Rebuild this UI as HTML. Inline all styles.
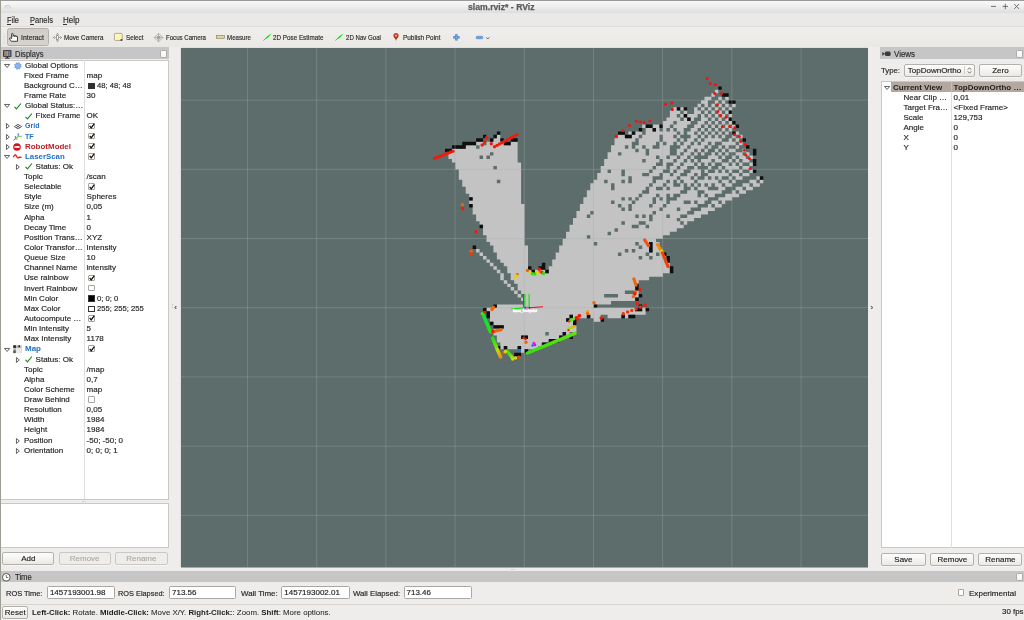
<!DOCTYPE html>
<html><head><meta charset="utf-8"><title>slam.rviz* - RViz</title>
<style>
*{box-sizing:border-box;margin:0;padding:0}
html,body{width:1024px;height:620px;overflow:hidden;background:#efedeb}
body{font-family:"Liberation Sans",sans-serif;font-size:8px;color:#1e1e1e;position:relative;-webkit-text-stroke:0.16px #1e1e1e}
.a{position:absolute}
.t{position:absolute;white-space:nowrap;line-height:10px;height:10px;filter:brightness(1)}
.b,b{font-weight:bold;-webkit-text-stroke:0}
.blue{color:#1f6fc8;font-weight:bold;-webkit-text-stroke:0}
.red{color:#b8232a;font-weight:bold;-webkit-text-stroke:0}
.btn{filter:brightness(1);position:absolute;border:1px solid #b4b0ab;border-radius:2px;background:linear-gradient(#fdfdfd,#ebe9e7);text-align:center;line-height:11px;font-size:8px;box-shadow:0 0.5px 0 #fff}
.btn.dis{color:#a9a7a4;-webkit-text-stroke:0.1px #a9a7a4;border-color:#cbc8c4;background:#efedeb}
.inp{filter:brightness(1);position:absolute;border:1px solid #aaa6a1;border-radius:1.5px;background:#fff;line-height:11px;padding-left:2px;font-size:8px}
.cb{position:absolute;width:6.9px;height:6.6px;border:0.7px solid #aaa49e;background:#fff;border-radius:1px}
.hdr{position:absolute;background:#c6c6c6}
.flt{position:absolute;width:7.2px;height:8.3px;border:0.6px solid #adadad;border-radius:1.8px;background:linear-gradient(#fff,#f4f4f4)}
svg{position:absolute;overflow:visible}
</style></head><body>
<div class="a" style="left:0.00px;top:0.00px;width:1024.00px;height:12.50px;background:linear-gradient(#fafafa,#f0f0f0 45%,#dddddd);"></div>
<div class="a" style="left:0.00px;top:12.50px;width:1024.00px;height:0.70px;background:#f6f6f6;"></div>
<div class="a" style="left:0.00px;top:0.00px;width:1024.00px;height:1.00px;background:#9a9a9a;"></div>
<div class="a" style="left:0.00px;top:0.00px;width:1.00px;height:620.00px;background:#9a9f96;"></div>
<span class="t " style="left:467.80px;top:2.30px;font-size:9px;color:#5a5a5a;font-weight:bold;transform:scaleX(0.9624);transform-origin:0 50%;-webkit-text-stroke:0.25px #5a5a5a;">slam.rviz* - RViz</span>
<svg style="left:988px;top:2px" width="34" height="10" viewBox="0 0 34 10"><g stroke="#686868" stroke-width="0.95" fill="none"><path d="M3 4.4 H8"/><path d="M14.6 4.4 H20 M17.3 1.7 V7.1"/><path d="M26.2 2 L31 6.9 M31 2 L26.2 6.9"/></g></svg>
<svg style="left:4px;top:4px" width="8" height="6" viewBox="0 0 8 6"><path d="M0.5 4.5 L2 1 L3.5 4.5 M3 1.5 h2 M5.5 1.5 v3 M6.5 3 l1 1.5" stroke="#c4c4c4" stroke-width="0.7" fill="none"/></svg>
<div class="a" style="left:1.00px;top:13.20px;width:1023.00px;height:13.80px;background:#ebe9e7;"></div>
<span class="t " style="left:7.00px;top:15.00px;font-size:8.6px;color:#333;transform:scaleX(0.8660);transform-origin:0 50%;">File</span>
<div class="a" style="left:7.00px;top:24.20px;width:4.20px;height:0.60px;background:#333;"></div>
<span class="t " style="left:29.50px;top:15.00px;font-size:8.6px;color:#333;transform:scaleX(0.8747);transform-origin:0 50%;">Panels</span>
<div class="a" style="left:29.50px;top:24.20px;width:4.20px;height:0.60px;background:#333;"></div>
<span class="t " style="left:62.50px;top:15.00px;font-size:8.6px;color:#333;transform:scaleX(0.9329);transform-origin:0 50%;">Help</span>
<div class="a" style="left:62.50px;top:24.20px;width:4.20px;height:0.60px;background:#333;"></div>
<div class="a" style="left:1.00px;top:26.20px;width:1023.00px;height:0.60px;background:#dedbd8;"></div>
<div class="a" style="left:1.00px;top:26.80px;width:1023.00px;height:0.70px;background:#f3f2f0;"></div>
<div class="a" style="left:1.00px;top:27.20px;width:1023.00px;height:20.30px;background:linear-gradient(#f1efed,#eae8e5);"></div>
<div class="a" style="left:2.50px;top:33.40px;width:0.80px;height:0.80px;background:#d9d6d2;"></div>
<div class="a" style="left:4.20px;top:34.70px;width:0.80px;height:0.80px;background:#d9d6d2;"></div>
<div class="a" style="left:2.50px;top:36.10px;width:0.80px;height:0.80px;background:#d9d6d2;"></div>
<div class="a" style="left:4.20px;top:37.40px;width:0.80px;height:0.80px;background:#d9d6d2;"></div>
<div class="a" style="left:2.50px;top:38.80px;width:0.80px;height:0.80px;background:#d9d6d2;"></div>
<div class="a" style="left:4.20px;top:40.10px;width:0.80px;height:0.80px;background:#d9d6d2;"></div>
<div class="a" style="left:2.50px;top:41.50px;width:0.80px;height:0.80px;background:#d9d6d2;"></div>
<div class="a" style="left:4.20px;top:42.80px;width:0.80px;height:0.80px;background:#d9d6d2;"></div>
<div class="a" style="left:7.1px;top:28.2px;width:42.4px;height:17.5px;border:0.7px solid #b3afaa;border-radius:2.5px;background:linear-gradient(#d1cdc9,#d6d3cf);"></div>
<span class="t " style="left:20.50px;top:33.00px;font-size:7.2px;color:#2e2e2e;transform:scaleX(0.9579);transform-origin:0 50%;">Interact</span>
<span class="t " style="left:64.00px;top:33.00px;font-size:7.2px;color:#2e2e2e;transform:scaleX(0.8737);transform-origin:0 50%;">Move Camera</span>
<span class="t " style="left:125.50px;top:33.00px;font-size:7.2px;color:#2e2e2e;transform:scaleX(0.8745);transform-origin:0 50%;">Select</span>
<span class="t " style="left:165.50px;top:33.00px;font-size:7.2px;color:#2e2e2e;transform:scaleX(0.8472);transform-origin:0 50%;">Focus Camera</span>
<span class="t " style="left:227.00px;top:33.00px;font-size:7.2px;color:#2e2e2e;transform:scaleX(0.8568);transform-origin:0 50%;">Measure</span>
<span class="t " style="left:273.00px;top:33.00px;font-size:7.2px;color:#2e2e2e;transform:scaleX(0.8764);transform-origin:0 50%;">2D Pose Estimate</span>
<span class="t " style="left:346.00px;top:33.00px;font-size:7.2px;color:#2e2e2e;transform:scaleX(0.8492);transform-origin:0 50%;">2D Nav Goal</span>
<span class="t " style="left:403.00px;top:33.00px;font-size:7.2px;color:#2e2e2e;transform:scaleX(0.8923);transform-origin:0 50%;">Publish Point</span>
<svg style="left:9.1px;top:33px" width="9.2" height="8.8" viewBox="0 0 9.2 8.8"><path d="M2.6 5.6 V1.1 a0.75 0.75 0 0 1 1.5 0 V3.4 V3.1 a0.75 0.7 0 0 1 1.5 0 V3.7 V3.4 a0.75 0.7 0 0 1 1.5 0 V4 V3.8 a0.7 0.7 0 0 1 1.4 0 V8.3 H2.4 L0.5 6 a0.7 0.7 0 0 1 1 -0.9 z" fill="#fff" stroke="#222" stroke-width="0.85" stroke-linejoin="round"/></svg>
<svg style="left:53px;top:33px" width="9" height="9" viewBox="0 0 9 9"><g stroke="#6a6a6a" stroke-width="0.6" fill="none"><path d="M4.5 0.4 V8.6 M0.4 4.5 H8.6" stroke-dasharray="0.9 0.5"/><path d="M3.3 1.7 L4.5 0.4 L5.7 1.7 M3.3 7.3 L4.5 8.6 L5.7 7.3 M1.7 3.3 L0.4 4.5 L1.7 5.7 M7.3 3.3 L8.6 4.5 L7.3 5.7"/><rect x="3.5" y="2.7" width="2" height="3.6" fill="#fff"/></g></svg>
<svg style="left:114.2px;top:33.2px" width="9" height="8.4" viewBox="0 0 9 9" preserveAspectRatio="none"><rect x="0.4" y="0.4" width="7.8" height="7.6" rx="1" fill="#fdf6b4" stroke="#8a8a7a" stroke-width="0.7"/><rect x="6.6" y="6.6" width="1.8" height="1.8" fill="#333"/></svg>
<svg style="left:154px;top:32.8px" width="9.2" height="9.2" viewBox="0 0 9.2 9.2"><g stroke="#8a8a8a" stroke-width="0.55" fill="none"><path d="M4.6 0.3 L8.9 4.6 L4.6 8.9 L0.3 4.6 z"/><path d="M4.6 0.3 V8.9 M0.3 4.6 H8.9"/><rect x="3.3" y="3.3" width="2.6" height="2.6"/></g></svg>
<svg style="left:216px;top:35.4px" width="9" height="3.6" viewBox="0 0 9 3.6"><rect x="0.3" y="0.3" width="8.3" height="3" fill="#dcd49c" stroke="#857c5c" stroke-width="0.6"/></svg>
<svg style="left:262.6px;top:33.6px" width="8.2" height="7" viewBox="0 0 8.2 7"><path d="M0 6.8 L4.4 2 L8 0 L5.6 3.2 z" fill="#1fe334"/><path d="M0.2 6.6 L7.8 0.2" stroke="#1fe334" stroke-width="0.7"/></svg>
<svg style="left:335.1px;top:33.6px" width="8.2" height="7" viewBox="0 0 8.2 7"><path d="M0 6.8 L4.4 2 L8 0 L5.6 3.2 z" fill="#1fe334"/><path d="M0.2 6.6 L7.8 0.2" stroke="#1fe334" stroke-width="0.7"/></svg>
<svg style="left:393.4px;top:33.2px" width="6" height="8" viewBox="0 0 6 8"><defs><linearGradient id="pp" x1="0" y1="0" x2="0" y2="1"><stop offset="0" stop-color="#e0452a"/><stop offset="1" stop-color="#7a3a1c"/></linearGradient></defs><path d="M3 7.9 C3 5.8 0.3 4.6 0.3 2.8 a2.7 2.7 0 0 1 5.4 0 C5.7 4.6 3 5.8 3 7.9 z" fill="url(#pp)"/><circle cx="3" cy="2.7" r="0.9" fill="#f0b8a4"/></svg>
<svg style="left:452.6px;top:33.9px" width="6.8" height="6.8" viewBox="0 0 6.8 6.8"><path d="M3.4 0.2 V6.6 M0.2 3.4 H6.6" stroke="#4379c6" stroke-width="2.3"/><path d="M3.4 0.9 V5.9 M0.9 3.4 H5.9" stroke="#7fa9e2" stroke-width="0.9"/></svg>
<svg style="left:476px;top:36px" width="7" height="3" viewBox="0 0 7 3"><rect x="0.2" y="0.2" width="6.6" height="2.6" rx="0.9" fill="#6c9cdc" stroke="#4a80cc" stroke-width="0.5"/></svg>
<svg style="left:486.3px;top:37.4px" width="3.6" height="2.6" viewBox="0 0 3.6 2.6"><path d="M0.3 0.4 L1.8 2 L3.3 0.4" stroke="#333" stroke-width="0.75" fill="none"/></svg>
<div class="hdr" style="left:1px;top:47.4px;width:167.7px;height:12.1px"></div>
<svg style="left:2.7px;top:49.8px" width="8.6" height="8.8" viewBox="0 0 8.6 8.8"><rect x="0.2" y="0.2" width="8.2" height="6.6" rx="0.4" fill="#1c1c1c"/><rect x="1" y="1" width="2.2" height="5" fill="#c66a6a"/><rect x="3.2" y="1" width="2.2" height="5" fill="#7ab87a"/><rect x="5.4" y="1" width="2.2" height="5" fill="#7a7ac8"/><rect x="3.5" y="6.8" width="1.6" height="1.1" fill="#1c1c1c"/><rect x="2" y="7.8" width="4.6" height="0.8" fill="#1c1c1c"/></svg>
<span class="t " style="left:14.50px;top:50.20px;font-size:8.2px;color:#333;transform:scaleX(0.9198);transform-origin:0 50%;">Displays</span>
<div class="flt" style="left:160px;top:49.5px"></div>
<div class="a" style="left:1.00px;top:59.60px;width:167.60px;height:440.00px;background:#fff;border:0.6px solid #cbc8c4;border-left:none"></div>
<div class="a" style="left:84.30px;top:60.00px;width:0.60px;height:439.00px;background:#dedede;"></div>
<svg style="left:3.90px;top:63.80px" width="6.2" height="4" viewBox="0 0 6.2 4"><path d="M0.5 0.45 H5.7 L3.1 3.5 z" fill="none" stroke="#3c3c3c" stroke-width="0.8"/></svg>
<svg style="left:13.8px;top:61.70px" width="7.8" height="7.8" viewBox="0 0 7.8 7.8"><circle cx="3.9" cy="3.9" r="2.9" fill="none" stroke="#6f9fe0" stroke-width="1.7" stroke-dasharray="1.35 0.93"/><circle cx="3.9" cy="3.9" r="2.95" fill="#77a5e4"/><circle cx="3.9" cy="3.9" r="1.7" fill="none" stroke="#a4c3ee" stroke-width="0.6"/><circle cx="3.9" cy="3.9" r="0.7" fill="#b8d0f2"/></svg>
<span class="t " style="left:25.00px;top:60.60px;">Global Options</span>
<span class="t " style="left:24.00px;top:70.73px;">Fixed Frame</span>
<span class="t " style="left:86.60px;top:70.73px;">map</span>
<span class="t " style="left:24.00px;top:80.87px;">Background C…</span>
<div class="a" style="left:88.20px;top:82.57px;width:6.6px;height:6.6px;background:#303030;border:0.6px solid #333"></div>
<span class="t " style="left:97.20px;top:80.87px;transform:scaleX(0.9550);transform-origin:0 50%;">48; 48; 48</span>
<span class="t " style="left:24.00px;top:91.00px;">Frame Rate</span>
<span class="t " style="left:86.60px;top:91.00px;">30</span>
<svg style="left:3.90px;top:104.34px" width="6.2" height="4" viewBox="0 0 6.2 4"><path d="M0.5 0.45 H5.7 L3.1 3.5 z" fill="none" stroke="#3c3c3c" stroke-width="0.8"/></svg>
<svg style="left:13.50px;top:102.54px" width="7.4" height="6.6" viewBox="0 0 7.4 6.6"><path d="M0.5 3.8 L2.5 5.9 L6.9 0.5" fill="none" stroke="#1f8a1f" stroke-width="1.15"/></svg>
<span class="t " style="left:25.00px;top:101.14px;">Global Status:…</span>
<svg style="left:24.50px;top:112.67px" width="7.4" height="6.6" viewBox="0 0 7.4 6.6"><path d="M0.5 3.8 L2.5 5.9 L6.9 0.5" fill="none" stroke="#1f8a1f" stroke-width="1.15"/></svg>
<span class="t " style="left:35.60px;top:111.27px;">Fixed Frame</span>
<span class="t " style="left:86.60px;top:111.27px;">OK</span>
<svg style="left:5.60px;top:123.41px" width="3.8" height="6" viewBox="0 0 3.8 6"><path d="M0.45 0.5 V5.5 L3.3 3 z" fill="none" stroke="#3c3c3c" stroke-width="0.8"/></svg>
<svg style="left:13.5px;top:123.81px" width="8" height="5.2" viewBox="0 0 8 5.2"><g stroke="#333" stroke-width="0.7" fill="none"><path d="M4 0.3 L7.7 2.6 L4 4.9 L0.3 2.6 z M2.1 1.4 L5.9 3.8 M5.9 1.4 L2.1 3.8"/></g></svg>
<span class="t blue" style="left:25.00px;top:121.41px;transform:scaleX(0.8817);transform-origin:0 50%;">Grid</span>
<div class="cb" style="left:87.90px;top:122.51px"></div>
<svg style="left:88.50px;top:122.71px" width="6" height="5.8" viewBox="0 0 6 5.8"><path d="M0.7 2.9 L2.2 4.9 L5.3 0.6" fill="none" stroke="#141414" stroke-width="1.25"/></svg>
<svg style="left:5.60px;top:133.54px" width="3.8" height="6" viewBox="0 0 3.8 6"><path d="M0.45 0.5 V5.5 L3.3 3 z" fill="none" stroke="#3c3c3c" stroke-width="0.8"/></svg>
<svg style="left:13px;top:132.54px" width="9" height="8" viewBox="0 0 9 8"><path d="M5.2 3.4 V0.2" stroke="#3a4fe0" stroke-width="0.9"/><path d="M2.4 5.6 V3" stroke="#3a4fe0" stroke-width="0.8"/><path d="M5 3.6 L0.4 7.4" stroke="#e03a3a" stroke-width="0.9"/><path d="M5.2 3.3 H8.8 M2.6 6 H4.8" stroke="#2fd02f" stroke-width="0.9"/></svg>
<span class="t blue" style="left:25.00px;top:131.54px;transform:scaleX(0.8903);transform-origin:0 50%;">TF</span>
<div class="cb" style="left:87.90px;top:132.64px"></div>
<svg style="left:88.50px;top:132.84px" width="6" height="5.8" viewBox="0 0 6 5.8"><path d="M0.7 2.9 L2.2 4.9 L5.3 0.6" fill="none" stroke="#141414" stroke-width="1.25"/></svg>
<svg style="left:5.60px;top:143.68px" width="3.8" height="6" viewBox="0 0 3.8 6"><path d="M0.45 0.5 V5.5 L3.3 3 z" fill="none" stroke="#3c3c3c" stroke-width="0.8"/></svg>
<svg style="left:13.2px;top:142.68px" width="8" height="8" viewBox="0 0 8 8"><circle cx="4" cy="4" r="3.8" fill="#d4141c"/><rect x="1.5" y="3.1" width="5" height="1.8" fill="#fff"/></svg>
<span class="t red" style="left:25.00px;top:141.68px;transform:scaleX(0.9955);transform-origin:0 50%;">RobotModel</span>
<div class="cb" style="left:87.90px;top:142.78px"></div>
<svg style="left:88.50px;top:142.98px" width="6" height="5.8" viewBox="0 0 6 5.8"><path d="M0.7 2.9 L2.2 4.9 L5.3 0.6" fill="none" stroke="#141414" stroke-width="1.25"/></svg>
<svg style="left:3.90px;top:155.01px" width="6.2" height="4" viewBox="0 0 6.2 4"><path d="M0.5 0.45 H5.7 L3.1 3.5 z" fill="none" stroke="#3c3c3c" stroke-width="0.8"/></svg>
<svg style="left:13px;top:154.31px" width="9" height="5" viewBox="0 0 9 5"><path d="M0.4 3.2 C1.4 0.2 2.6 0.2 3.4 2 S5.2 4.6 6.2 3.2 L8.6 3.4" stroke="#e01c14" stroke-width="1.35" fill="none"/></svg>
<span class="t blue" style="left:25.00px;top:151.81px;transform:scaleX(0.9835);transform-origin:0 50%;">LaserScan</span>
<div class="cb" style="left:87.90px;top:152.91px"></div>
<svg style="left:88.50px;top:153.12px" width="6" height="5.8" viewBox="0 0 6 5.8"><path d="M0.7 2.9 L2.2 4.9 L5.3 0.6" fill="none" stroke="#141414" stroke-width="1.25"/></svg>
<svg style="left:16.20px;top:163.95px" width="3.8" height="6" viewBox="0 0 3.8 6"><path d="M0.45 0.5 V5.5 L3.3 3 z" fill="none" stroke="#3c3c3c" stroke-width="0.8"/></svg>
<svg style="left:24.50px;top:163.35px" width="7.4" height="6.6" viewBox="0 0 7.4 6.6"><path d="M0.5 3.8 L2.5 5.9 L6.9 0.5" fill="none" stroke="#1f8a1f" stroke-width="1.15"/></svg>
<span class="t " style="left:35.60px;top:161.95px;">Status: Ok</span>
<span class="t " style="left:24.00px;top:172.08px;">Topic</span>
<span class="t " style="left:86.60px;top:172.08px;">/scan</span>
<span class="t " style="left:24.00px;top:182.22px;">Selectable</span>
<div class="cb" style="left:87.90px;top:183.32px"></div>
<svg style="left:88.50px;top:183.52px" width="6" height="5.8" viewBox="0 0 6 5.8"><path d="M0.7 2.9 L2.2 4.9 L5.3 0.6" fill="none" stroke="#141414" stroke-width="1.25"/></svg>
<span class="t " style="left:24.00px;top:192.35px;">Style</span>
<span class="t " style="left:86.60px;top:192.35px;">Spheres</span>
<span class="t " style="left:24.00px;top:202.49px;">Size (m)</span>
<span class="t " style="left:86.60px;top:202.49px;">0,05</span>
<span class="t " style="left:24.00px;top:212.62px;">Alpha</span>
<span class="t " style="left:86.60px;top:212.62px;">1</span>
<span class="t " style="left:24.00px;top:222.76px;">Decay Time</span>
<span class="t " style="left:86.60px;top:222.76px;">0</span>
<span class="t " style="left:24.00px;top:232.89px;">Position Trans…</span>
<span class="t " style="left:86.60px;top:232.89px;">XYZ</span>
<span class="t " style="left:24.00px;top:243.03px;">Color Transfor…</span>
<span class="t " style="left:86.60px;top:243.03px;">Intensity</span>
<span class="t " style="left:24.00px;top:253.16px;">Queue Size</span>
<span class="t " style="left:86.60px;top:253.16px;">10</span>
<span class="t " style="left:24.00px;top:263.30px;">Channel Name</span>
<span class="t " style="left:86.60px;top:263.30px;">intensity</span>
<span class="t " style="left:24.00px;top:273.44px;">Use rainbow</span>
<div class="cb" style="left:87.90px;top:274.54px"></div>
<svg style="left:88.50px;top:274.74px" width="6" height="5.8" viewBox="0 0 6 5.8"><path d="M0.7 2.9 L2.2 4.9 L5.3 0.6" fill="none" stroke="#141414" stroke-width="1.25"/></svg>
<span class="t " style="left:24.00px;top:283.57px;">Invert Rainbow</span>
<div class="cb" style="left:87.90px;top:284.67px"></div>
<span class="t " style="left:24.00px;top:293.70px;">Min Color</span>
<div class="a" style="left:88.20px;top:295.40px;width:6.6px;height:6.6px;background:#000;border:0.6px solid #333"></div>
<span class="t " style="left:97.20px;top:293.70px;transform:scaleX(0.9550);transform-origin:0 50%;">0; 0; 0</span>
<span class="t " style="left:24.00px;top:303.84px;">Max Color</span>
<div class="a" style="left:88.20px;top:305.54px;width:6.6px;height:6.6px;background:#fff;border:0.6px solid #333"></div>
<span class="t " style="left:97.20px;top:303.84px;transform:scaleX(0.9550);transform-origin:0 50%;">255; 255; 255</span>
<span class="t " style="left:24.00px;top:313.98px;">Autocompute …</span>
<div class="cb" style="left:87.90px;top:315.08px"></div>
<svg style="left:88.50px;top:315.28px" width="6" height="5.8" viewBox="0 0 6 5.8"><path d="M0.7 2.9 L2.2 4.9 L5.3 0.6" fill="none" stroke="#141414" stroke-width="1.25"/></svg>
<span class="t " style="left:24.00px;top:324.11px;">Min Intensity</span>
<span class="t " style="left:86.60px;top:324.11px;">5</span>
<span class="t " style="left:24.00px;top:334.25px;">Max Intensity</span>
<span class="t " style="left:86.60px;top:334.25px;">1178</span>
<svg style="left:3.90px;top:347.58px" width="6.2" height="4" viewBox="0 0 6.2 4"><path d="M0.5 0.45 H5.7 L3.1 3.5 z" fill="none" stroke="#3c3c3c" stroke-width="0.8"/></svg>
<svg style="left:13px;top:345.18px" width="9" height="8.4" viewBox="0 0 9 8.4"><rect x="0.3" y="0.3" width="8.4" height="7.8" fill="#b9b9b9"/><rect x="0.3" y="0.3" width="2.6" height="2.6" fill="#222"/><rect x="5.4" y="0.3" width="1.6" height="2" fill="#222"/><rect x="3" y="3" width="5.7" height="5.1" fill="#e8e8e8"/><rect x="0.3" y="5.4" width="2.4" height="2.7" fill="#555"/></svg>
<span class="t blue" style="left:25.00px;top:344.38px;transform:scaleX(1.0001);transform-origin:0 50%;">Map</span>
<div class="cb" style="left:87.90px;top:345.48px"></div>
<svg style="left:88.50px;top:345.68px" width="6" height="5.8" viewBox="0 0 6 5.8"><path d="M0.7 2.9 L2.2 4.9 L5.3 0.6" fill="none" stroke="#141414" stroke-width="1.25"/></svg>
<svg style="left:16.20px;top:356.51px" width="3.8" height="6" viewBox="0 0 3.8 6"><path d="M0.45 0.5 V5.5 L3.3 3 z" fill="none" stroke="#3c3c3c" stroke-width="0.8"/></svg>
<svg style="left:24.50px;top:355.91px" width="7.4" height="6.6" viewBox="0 0 7.4 6.6"><path d="M0.5 3.8 L2.5 5.9 L6.9 0.5" fill="none" stroke="#1f8a1f" stroke-width="1.15"/></svg>
<span class="t " style="left:35.60px;top:354.51px;">Status: Ok</span>
<span class="t " style="left:24.00px;top:364.65px;">Topic</span>
<span class="t " style="left:86.60px;top:364.65px;">/map</span>
<span class="t " style="left:24.00px;top:374.78px;">Alpha</span>
<span class="t " style="left:86.60px;top:374.78px;">0,7</span>
<span class="t " style="left:24.00px;top:384.92px;">Color Scheme</span>
<span class="t " style="left:86.60px;top:384.92px;">map</span>
<span class="t " style="left:24.00px;top:395.05px;">Draw Behind</span>
<div class="cb" style="left:87.90px;top:396.15px"></div>
<span class="t " style="left:24.00px;top:405.19px;">Resolution</span>
<span class="t " style="left:86.60px;top:405.19px;">0,05</span>
<span class="t " style="left:24.00px;top:415.32px;">Width</span>
<span class="t " style="left:86.60px;top:415.32px;">1984</span>
<span class="t " style="left:24.00px;top:425.46px;">Height</span>
<span class="t " style="left:86.60px;top:425.46px;">1984</span>
<svg style="left:16.20px;top:437.60px" width="3.8" height="6" viewBox="0 0 3.8 6"><path d="M0.45 0.5 V5.5 L3.3 3 z" fill="none" stroke="#3c3c3c" stroke-width="0.8"/></svg>
<span class="t " style="left:24.00px;top:435.60px;">Position</span>
<span class="t " style="left:86.60px;top:435.60px;">-50; -50; 0</span>
<svg style="left:16.20px;top:447.73px" width="3.8" height="6" viewBox="0 0 3.8 6"><path d="M0.45 0.5 V5.5 L3.3 3 z" fill="none" stroke="#3c3c3c" stroke-width="0.8"/></svg>
<span class="t " style="left:24.00px;top:445.73px;">Orientation</span>
<span class="t " style="left:86.60px;top:445.73px;">0; 0; 0; 1</span>
<div class="a" style="left:81.50px;top:500.80px;width:0.70px;height:0.70px;background:#cfccc8;"></div>
<div class="a" style="left:83.20px;top:500.80px;width:0.70px;height:0.70px;background:#cfccc8;"></div>
<div class="a" style="left:84.90px;top:500.80px;width:0.70px;height:0.70px;background:#cfccc8;"></div>
<div class="a" style="left:1.00px;top:503.40px;width:167.60px;height:44.60px;background:#fff;border:0.6px solid #cbc8c4;border-left:none"></div>
<div class="btn" style="left:2.3px;top:551.7px;width:52.2px;height:13.2px">Add</div>
<div class="btn dis" style="left:58.6px;top:551.7px;width:52.2px;height:13.2px">Remove</div>
<div class="btn dis" style="left:115.1px;top:551.7px;width:52.5px;height:13.2px">Rename</div>
<span class="t " style="left:174.30px;top:302.60px;color:#555;">‹</span>
<div class="a" style="left:172.00px;top:303.50px;width:0.70px;height:0.70px;background:#cfccc8;"></div>
<div class="a" style="left:172.00px;top:305.30px;width:0.70px;height:0.70px;background:#cfccc8;"></div>
<div class="a" style="left:172.00px;top:307.10px;width:0.70px;height:0.70px;background:#cfccc8;"></div>
<span class="t " style="left:870.50px;top:302.60px;color:#555;">›</span>
<div class="hdr" style="left:880.4px;top:47.4px;width:143.6px;height:12.1px"></div>
<svg style="left:882.3px;top:51px" width="9" height="6" viewBox="0 0 9 6"><rect x="3" y="0.6" width="5.6" height="4.4" rx="1.3" fill="#3a3a3a"/><path d="M0.3 0.9 L3.2 2.8 L0.3 4.7 z" fill="#3a3a3a"/></svg>
<span class="t " style="left:893.60px;top:50.20px;font-size:8.2px;color:#333;transform:scaleX(0.9666);transform-origin:0 50%;">Views</span>
<div class="flt" style="left:1015.5px;top:49.5px"></div>
<span class="t " style="left:881.30px;top:66.00px;transform:scaleX(0.9711);transform-origin:0 50%;">Type:</span>
<div class="btn" style="left:904.2px;top:63.6px;width:70.4px;height:13.1px;text-align:left;padding-left:2.6px;line-height:12px">TopDownOrtho</div>
<div class="a" style="left:963.60px;top:65.80px;width:0.60px;height:8.60px;background:#d5d2ce;"></div>
<svg style="left:966.6px;top:66.8px" width="5" height="7" viewBox="0 0 5 7"><path d="M0.8 2.6 L2.5 0.8 L4.2 2.6 M0.8 4.4 L2.5 6.2 L4.2 4.4" stroke="#444" stroke-width="0.75" fill="none"/></svg>
<div class="btn" style="left:978.5px;top:63.6px;width:43.8px;height:13.1px;line-height:12px">Zero</div>
<div class="a" style="left:880.60px;top:81.20px;width:143.40px;height:467.20px;background:#fff;border:0.6px solid #cbc8c4;border-right:none"></div>
<div class="a" style="left:951.40px;top:81.60px;width:0.60px;height:466.60px;background:#dedede;"></div>
<div class="a" style="left:891.00px;top:81.70px;width:133.00px;height:10.10px;background:#b4a79e;"></div>
<div class="a" style="left:951.40px;top:81.70px;width:0.60px;height:10.10px;background:#c9beb6;"></div>
<svg style="left:883.60px;top:85.70px" width="6.2" height="4" viewBox="0 0 6.2 4"><path d="M0.5 0.45 H5.7 L3.1 3.5 z" fill="none" stroke="#3c3c3c" stroke-width="0.8"/></svg>
<span class="t b" style="left:893.00px;top:82.50px;color:#1f1f1f;">Current View</span>
<span class="t b" style="left:953.60px;top:82.50px;color:#1f1f1f;">TopDownOrtho …</span>
<span class="t " style="left:903.50px;top:92.64px;">Near Clip …</span>
<span class="t " style="left:953.60px;top:92.64px;">0,01</span>
<span class="t " style="left:903.50px;top:102.77px;">Target Fra…</span>
<span class="t " style="left:953.60px;top:102.77px;">&lt;Fixed Frame&gt;</span>
<span class="t " style="left:903.50px;top:112.91px;">Scale</span>
<span class="t " style="left:953.60px;top:112.91px;">129,753</span>
<span class="t " style="left:903.50px;top:123.04px;">Angle</span>
<span class="t " style="left:953.60px;top:123.04px;">0</span>
<span class="t " style="left:903.50px;top:133.18px;">X</span>
<span class="t " style="left:953.60px;top:133.18px;">0</span>
<span class="t " style="left:903.50px;top:143.31px;">Y</span>
<span class="t " style="left:953.60px;top:143.31px;">0</span>
<div class="btn" style="left:881.3px;top:552.8px;width:44.3px;height:13.2px">Save</div>
<div class="btn" style="left:930.3px;top:552.8px;width:44.2px;height:13.2px">Remove</div>
<div class="btn" style="left:978.3px;top:552.8px;width:44.2px;height:13.2px">Rename</div>
<div class="a" style="left:510.50px;top:569.00px;width:0.70px;height:0.70px;background:#cfccc8;"></div>
<div class="a" style="left:512.20px;top:569.00px;width:0.70px;height:0.70px;background:#cfccc8;"></div>
<div class="a" style="left:513.90px;top:569.00px;width:0.70px;height:0.70px;background:#cfccc8;"></div>
<div class="hdr" style="left:1px;top:571.3px;width:1023px;height:11.2px"></div>
<svg style="left:2.3px;top:572.6px" width="8.6" height="8.6" viewBox="0 0 8.6 8.6"><circle cx="4.3" cy="4.3" r="3.8" fill="#fff" stroke="#333" stroke-width="0.8"/><path d="M4.3 2 V4.5 H6.3" stroke="#333" stroke-width="0.7" fill="none"/></svg>
<span class="t " style="left:14.60px;top:573.40px;font-size:8.2px;color:#333;transform:scaleX(0.9377);transform-origin:0 50%;">Time</span>
<div class="flt" style="left:1015.5px;top:572.6px"></div>
<span class="t " style="left:6.40px;top:588.80px;transform:scaleX(0.9306);transform-origin:0 50%;">ROS Time:</span>
<div class="inp" style="left:46.9px;top:586.3px;width:67.7px;height:13.2px">1457193001.98</div>
<span class="t " style="left:118.40px;top:588.80px;transform:scaleX(0.9193);transform-origin:0 50%;">ROS Elapsed:</span>
<div class="inp" style="left:169px;top:586.3px;width:67.4px;height:13.2px">713.56</div>
<span class="t " style="left:240.50px;top:588.80px;transform:scaleX(0.9909);transform-origin:0 50%;">Wall Time:</span>
<div class="inp" style="left:281.3px;top:586.3px;width:68.4px;height:13.2px">1457193002.01</div>
<span class="t " style="left:353.00px;top:588.80px;transform:scaleX(0.9709);transform-origin:0 50%;">Wall Elapsed:</span>
<div class="inp" style="left:403.5px;top:586.3px;width:68.3px;height:13.2px">713.46</div>
<div class="cb" style="left:957.50px;top:589.30px"></div>
<span class="t " style="left:969.00px;top:588.80px;transform:scaleX(1.0067);transform-origin:0 50%;">Experimental</span>
<div class="a" style="left:1.00px;top:603.80px;width:1023.00px;height:0.60px;background:#dad7d3;"></div>
<div class="btn" style="left:2.3px;top:606.3px;width:25.8px;height:12.3px;line-height:12.4px">Reset</div>
<span class="t" style="left:32.2px;top:608.3px;-webkit-text-stroke:0.05px #1e1e1e;transform:scaleX(0.981);transform-origin:0 50%" id="st"><b>Left-Click:</b> Rotate. <b>Middle-Click:</b> Move X/Y. <b>Right-Click:</b>: Zoom. <b>Shift</b>: More options.</span>
<span class="t " style="left:1002.30px;top:607.20px;transform:scaleX(0.9866);transform-origin:0 50%;">30 fps</span>
<svg style="left:0;top:0" width="1024" height="620" viewBox="0 0 1024 620"><defs><clipPath id="vc"><rect x="180.9" y="47.9" width="687.1" height="519.6"/></clipPath><linearGradient id="g1" x1="0" y1="0" x2="1" y2="0"><stop offset="0" stop-color="#30e010"/><stop offset="1" stop-color="#00e060"/></linearGradient></defs><rect x="180.9" y="47.9" width="687.1" height="519.6" fill="#5d6d6b"/><g clip-path="url(#vc)"><path d="M714.86,89.86h3.46v3.46h-3.46zM711.40,93.32h3.46v3.46h-3.46zM704.48,96.78h6.92v3.46h-6.92zM718.32,96.78h3.46v3.46h-3.46zM725.24,96.78h3.46v3.46h-3.46zM701.02,100.24h6.92v3.46h-6.92zM714.86,100.24h3.46v3.46h-3.46zM721.78,100.24h3.46v3.46h-3.46zM697.55,103.70h3.46v3.46h-3.46zM704.48,103.70h3.46v3.46h-3.46zM711.40,103.70h3.46v3.46h-3.46zM718.32,103.70h3.46v3.46h-3.46zM725.24,103.70h3.46v3.46h-3.46zM732.16,103.70h3.46v3.46h-3.46zM673.33,107.16h3.46v3.46h-3.46zM680.25,107.16h3.46v3.46h-3.46zM694.09,107.16h3.46v3.46h-3.46zM701.02,107.16h3.46v3.46h-3.46zM707.94,107.16h3.46v3.46h-3.46zM714.86,107.16h3.46v3.46h-3.46zM721.78,107.16h3.46v3.46h-3.46zM728.70,107.16h3.46v3.46h-3.46zM669.87,110.62h10.38v3.46h-10.38zM683.71,110.62h3.46v3.46h-3.46zM694.09,110.62h6.92v3.46h-6.92zM704.48,110.62h3.46v3.46h-3.46zM711.40,110.62h3.46v3.46h-3.46zM718.32,110.62h3.46v3.46h-3.46zM725.24,110.62h3.46v3.46h-3.46zM669.87,114.08h6.92v3.46h-6.92zM680.25,114.08h3.46v3.46h-3.46zM687.17,114.08h10.38v3.46h-10.38zM701.02,114.08h3.46v3.46h-3.46zM707.94,114.08h3.46v3.46h-3.46zM714.86,114.08h3.46v3.46h-3.46zM721.78,114.08h3.46v3.46h-3.46zM728.70,114.08h3.46v3.46h-3.46zM666.41,117.54h13.84v3.46h-13.84zM683.71,117.54h3.46v3.46h-3.46zM690.63,117.54h3.46v3.46h-3.46zM701.02,117.54h6.92v3.46h-6.92zM711.40,117.54h3.46v3.46h-3.46zM718.32,117.54h3.46v3.46h-3.46zM725.24,117.54h3.46v3.46h-3.46zM662.95,121.00h10.38v3.46h-10.38zM676.79,121.00h13.84v3.46h-13.84zM697.55,121.00h6.92v3.46h-6.92zM707.94,121.00h3.46v3.46h-3.46zM714.86,121.00h3.46v3.46h-3.46zM721.78,121.00h3.46v3.46h-3.46zM728.70,121.00h3.46v3.46h-3.46zM642.19,124.46h3.46v3.46h-3.46zM652.57,124.46h6.92v3.46h-6.92zM662.95,124.46h6.92v3.46h-6.92zM673.33,124.46h13.84v3.46h-13.84zM694.09,124.46h6.92v3.46h-6.92zM704.48,124.46h3.46v3.46h-3.46zM711.40,124.46h3.46v3.46h-3.46zM718.32,124.46h3.46v3.46h-3.46zM725.24,124.46h3.46v3.46h-3.46zM732.16,124.46h3.46v3.46h-3.46zM645.65,127.92h6.92v3.46h-6.92zM656.03,127.92h3.46v3.46h-3.46zM662.95,127.92h3.46v3.46h-3.46zM669.87,127.92h3.46v3.46h-3.46zM676.79,127.92h6.92v3.46h-6.92zM690.63,127.92h6.92v3.46h-6.92zM701.02,127.92h3.46v3.46h-3.46zM707.94,127.92h3.46v3.46h-3.46zM714.86,127.92h3.46v3.46h-3.46zM721.78,127.92h3.46v3.46h-3.46zM728.70,127.92h3.46v3.46h-3.46zM628.35,131.38h3.46v3.46h-3.46zM635.27,131.38h6.92v3.46h-6.92zM645.65,131.38h31.14v3.46h-31.14zM680.25,131.38h3.46v3.46h-3.46zM687.17,131.38h6.92v3.46h-6.92zM697.55,131.38h3.46v3.46h-3.46zM704.48,131.38h3.46v3.46h-3.46zM711.40,131.38h3.46v3.46h-3.46zM718.32,131.38h3.46v3.46h-3.46zM725.24,131.38h3.46v3.46h-3.46zM735.62,131.38h3.46v3.46h-3.46zM496.87,134.85h3.46v3.46h-3.46zM617.97,134.85h6.92v3.46h-6.92zM631.81,134.85h6.92v3.46h-6.92zM642.19,134.85h17.30v3.46h-17.30zM662.95,134.85h10.38v3.46h-10.38zM676.79,134.85h3.46v3.46h-3.46zM690.63,134.85h6.92v3.46h-6.92zM701.02,134.85h3.46v3.46h-3.46zM707.94,134.85h3.46v3.46h-3.46zM714.86,134.85h3.46v3.46h-3.46zM721.78,134.85h3.46v3.46h-3.46zM732.16,134.85h3.46v3.46h-3.46zM739.08,134.85h3.46v3.46h-3.46zM493.41,138.31h6.92v3.46h-6.92zM614.51,138.31h20.76v3.46h-20.76zM638.73,138.31h20.76v3.46h-20.76zM662.95,138.31h13.84v3.46h-13.84zM680.25,138.31h3.46v3.46h-3.46zM687.17,138.31h6.92v3.46h-6.92zM697.55,138.31h3.46v3.46h-3.46zM704.48,138.31h17.30v3.46h-17.30zM728.70,138.31h3.46v3.46h-3.46zM735.62,138.31h3.46v3.46h-3.46zM476.11,141.77h6.92v3.46h-6.92zM486.49,141.77h17.30v3.46h-17.30zM510.71,141.77h6.92v3.46h-6.92zM614.51,141.77h17.30v3.46h-17.30zM638.73,141.77h17.30v3.46h-17.30zM659.49,141.77h3.46v3.46h-3.46zM666.41,141.77h6.92v3.46h-6.92zM676.79,141.77h3.46v3.46h-3.46zM683.71,141.77h6.92v3.46h-6.92zM694.09,141.77h3.46v3.46h-3.46zM701.02,141.77h6.92v3.46h-6.92zM711.40,141.77h3.46v3.46h-3.46zM721.78,141.77h13.84v3.46h-13.84zM739.08,141.77h3.46v3.46h-3.46zM465.73,145.23h10.38v3.46h-10.38zM479.57,145.23h38.06v3.46h-38.06zM611.05,145.23h13.84v3.46h-13.84zM628.35,145.23h3.46v3.46h-3.46zM635.27,145.23h6.92v3.46h-6.92zM645.65,145.23h6.92v3.46h-6.92zM659.49,145.23h10.38v3.46h-10.38zM680.25,145.23h6.92v3.46h-6.92zM690.63,145.23h13.84v3.46h-13.84zM707.94,145.23h3.46v3.46h-3.46zM718.32,145.23h3.46v3.46h-3.46zM725.24,145.23h3.46v3.46h-3.46zM735.62,145.23h3.46v3.46h-3.46zM451.89,148.69h65.74v3.46h-65.74zM611.05,148.69h24.22v3.46h-24.22zM638.73,148.69h6.92v3.46h-6.92zM649.11,148.69h20.76v3.46h-20.76zM676.79,148.69h6.92v3.46h-6.92zM687.17,148.69h6.92v3.46h-6.92zM697.55,148.69h3.46v3.46h-3.46zM704.48,148.69h3.46v3.46h-3.46zM714.86,148.69h3.46v3.46h-3.46zM721.78,148.69h3.46v3.46h-3.46zM728.70,148.69h6.92v3.46h-6.92zM742.54,148.69h3.46v3.46h-3.46zM448.43,152.15h41.52v3.46h-41.52zM493.41,152.15h24.22v3.46h-24.22zM607.59,152.15h10.38v3.46h-10.38zM621.43,152.15h24.22v3.46h-24.22zM649.11,152.15h20.76v3.46h-20.76zM676.79,152.15h3.46v3.46h-3.46zM683.71,152.15h6.92v3.46h-6.92zM694.09,152.15h3.46v3.46h-3.46zM701.02,152.15h3.46v3.46h-3.46zM711.40,152.15h3.46v3.46h-3.46zM718.32,152.15h3.46v3.46h-3.46zM725.24,152.15h3.46v3.46h-3.46zM735.62,152.15h6.92v3.46h-6.92zM746.00,152.15h3.46v3.46h-3.46zM448.43,155.61h31.14v3.46h-31.14zM483.03,155.61h3.46v3.46h-3.46zM489.95,155.61h27.68v3.46h-27.68zM607.59,155.61h48.44v3.46h-48.44zM659.49,155.61h6.92v3.46h-6.92zM669.87,155.61h6.92v3.46h-6.92zM680.25,155.61h6.92v3.46h-6.92zM690.63,155.61h3.46v3.46h-3.46zM707.94,155.61h10.38v3.46h-10.38zM721.78,155.61h3.46v3.46h-3.46zM732.16,155.61h3.46v3.46h-3.46zM739.08,155.61h6.92v3.46h-6.92zM749.46,155.61h3.46v3.46h-3.46zM451.89,159.07h65.74v3.46h-65.74zM604.13,159.07h38.06v3.46h-38.06zM645.65,159.07h13.84v3.46h-13.84zM662.95,159.07h10.38v3.46h-10.38zM676.79,159.07h6.92v3.46h-6.92zM687.17,159.07h3.46v3.46h-3.46zM694.09,159.07h3.46v3.46h-3.46zM701.02,159.07h10.38v3.46h-10.38zM714.86,159.07h6.92v3.46h-6.92zM728.70,159.07h3.46v3.46h-3.46zM735.62,159.07h3.46v3.46h-3.46zM742.54,159.07h6.92v3.46h-6.92zM455.35,162.53h65.74v3.46h-65.74zM604.13,162.53h51.90v3.46h-51.90zM662.95,162.53h3.46v3.46h-3.46zM673.33,162.53h6.92v3.46h-6.92zM683.71,162.53h10.38v3.46h-10.38zM697.55,162.53h3.46v3.46h-3.46zM704.48,162.53h3.46v3.46h-3.46zM711.40,162.53h3.46v3.46h-3.46zM721.78,162.53h6.92v3.46h-6.92zM732.16,162.53h3.46v3.46h-3.46zM739.08,162.53h3.46v3.46h-3.46zM749.46,162.53h3.46v3.46h-3.46zM455.35,165.99h38.06v3.46h-38.06zM496.87,165.99h24.22v3.46h-24.22zM600.67,165.99h51.90v3.46h-51.90zM656.03,165.99h10.38v3.46h-10.38zM669.87,165.99h6.92v3.46h-6.92zM680.25,165.99h6.92v3.46h-6.92zM694.09,165.99h3.46v3.46h-3.46zM707.94,165.99h3.46v3.46h-3.46zM718.32,165.99h3.46v3.46h-3.46zM725.24,165.99h13.84v3.46h-13.84zM742.54,165.99h6.92v3.46h-6.92zM458.81,169.45h62.28v3.46h-62.28zM600.67,169.45h6.92v3.46h-6.92zM611.05,169.45h10.38v3.46h-10.38zM624.89,169.45h24.22v3.46h-24.22zM652.57,169.45h10.38v3.46h-10.38zM669.87,169.45h3.46v3.46h-3.46zM676.79,169.45h6.92v3.46h-6.92zM690.63,169.45h10.38v3.46h-10.38zM704.48,169.45h3.46v3.46h-3.46zM714.86,169.45h3.46v3.46h-3.46zM721.78,169.45h3.46v3.46h-3.46zM728.70,169.45h3.46v3.46h-3.46zM739.08,169.45h3.46v3.46h-3.46zM749.46,169.45h3.46v3.46h-3.46zM458.81,172.91h62.28v3.46h-62.28zM597.21,172.91h24.22v3.46h-24.22zM624.89,172.91h17.30v3.46h-17.30zM649.11,172.91h10.38v3.46h-10.38zM662.95,172.91h6.92v3.46h-6.92zM673.33,172.91h6.92v3.46h-6.92zM687.17,172.91h6.92v3.46h-6.92zM697.55,172.91h3.46v3.46h-3.46zM707.94,172.91h20.76v3.46h-20.76zM732.16,172.91h6.92v3.46h-6.92zM742.54,172.91h6.92v3.46h-6.92zM458.81,176.37h62.28v3.46h-62.28zM597.21,176.37h31.14v3.46h-31.14zM631.81,176.37h20.76v3.46h-20.76zM662.95,176.37h13.84v3.46h-13.84zM680.25,176.37h10.38v3.46h-10.38zM694.09,176.37h3.46v3.46h-3.46zM704.48,176.37h3.46v3.46h-3.46zM711.40,176.37h3.46v3.46h-3.46zM718.32,176.37h3.46v3.46h-3.46zM728.70,176.37h3.46v3.46h-3.46zM735.62,176.37h6.92v3.46h-6.92zM756.38,176.37h3.46v3.46h-3.46zM462.27,179.83h34.60v3.46h-34.60zM500.33,179.83h20.76v3.46h-20.76zM593.75,179.83h10.38v3.46h-10.38zM607.59,179.83h13.84v3.46h-13.84zM624.89,179.83h3.46v3.46h-3.46zM631.81,179.83h20.76v3.46h-20.76zM656.03,179.83h10.38v3.46h-10.38zM669.87,179.83h3.46v3.46h-3.46zM676.79,179.83h3.46v3.46h-3.46zM683.71,179.83h10.38v3.46h-10.38zM697.55,179.83h20.76v3.46h-20.76zM721.78,179.83h6.92v3.46h-6.92zM732.16,179.83h3.46v3.46h-3.46zM749.46,179.83h6.92v3.46h-6.92zM759.84,179.83h3.46v3.46h-3.46zM462.27,183.29h58.82v3.46h-58.82zM590.29,183.29h20.76v3.46h-20.76zM614.51,183.29h34.60v3.46h-34.60zM652.57,183.29h10.38v3.46h-10.38zM666.41,183.29h6.92v3.46h-6.92zM680.25,183.29h3.46v3.46h-3.46zM687.17,183.29h3.46v3.46h-3.46zM694.09,183.29h3.46v3.46h-3.46zM701.02,183.29h3.46v3.46h-3.46zM707.94,183.29h3.46v3.46h-3.46zM714.86,183.29h6.92v3.46h-6.92zM725.24,183.29h6.92v3.46h-6.92zM742.54,183.29h6.92v3.46h-6.92zM752.92,183.29h6.92v3.46h-6.92zM465.73,186.75h55.36v3.46h-55.36zM590.29,186.75h20.76v3.46h-20.76zM614.51,186.75h31.14v3.46h-31.14zM649.11,186.75h6.92v3.46h-6.92zM662.95,186.75h3.46v3.46h-3.46zM669.87,186.75h13.84v3.46h-13.84zM690.63,186.75h3.46v3.46h-3.46zM697.55,186.75h10.38v3.46h-10.38zM718.32,186.75h6.92v3.46h-6.92zM735.62,186.75h6.92v3.46h-6.92zM746.00,186.75h6.92v3.46h-6.92zM465.73,190.21h55.36v3.46h-55.36zM586.83,190.21h55.36v3.46h-55.36zM649.11,190.21h31.14v3.46h-31.14zM687.17,190.21h10.38v3.46h-10.38zM704.48,190.21h17.30v3.46h-17.30zM732.16,190.21h3.46v3.46h-3.46zM739.08,190.21h6.92v3.46h-6.92zM469.19,193.67h51.90v3.46h-51.90zM586.83,193.67h51.90v3.46h-51.90zM642.19,193.67h13.84v3.46h-13.84zM659.49,193.67h6.92v3.46h-6.92zM669.87,193.67h3.46v3.46h-3.46zM680.25,193.67h17.30v3.46h-17.30zM701.02,193.67h3.46v3.46h-3.46zM707.94,193.67h6.92v3.46h-6.92zM725.24,193.67h13.84v3.46h-13.84zM472.65,197.13h48.44v3.46h-48.44zM583.37,197.13h38.06v3.46h-38.06zM624.89,197.13h3.46v3.46h-3.46zM631.81,197.13h3.46v3.46h-3.46zM638.73,197.13h13.84v3.46h-13.84zM656.03,197.13h3.46v3.46h-3.46zM662.95,197.13h3.46v3.46h-3.46zM676.79,197.13h31.14v3.46h-31.14zM718.32,197.13h13.84v3.46h-13.84zM469.19,200.59h51.90v3.46h-51.90zM583.37,200.59h27.68v3.46h-27.68zM614.51,200.59h17.30v3.46h-17.30zM635.27,200.59h17.30v3.46h-17.30zM656.03,200.59h10.38v3.46h-10.38zM669.87,200.59h13.84v3.46h-13.84zM690.63,200.59h3.46v3.46h-3.46zM697.55,200.59h6.92v3.46h-6.92zM711.40,200.59h6.92v3.46h-6.92zM721.78,200.59h3.46v3.46h-3.46zM472.65,204.05h51.90v3.46h-51.90zM579.91,204.05h38.06v3.46h-38.06zM621.43,204.05h6.92v3.46h-6.92zM631.81,204.05h17.30v3.46h-17.30zM652.57,204.05h10.38v3.46h-10.38zM666.41,204.05h31.14v3.46h-31.14zM707.94,204.05h3.46v3.46h-3.46zM714.86,204.05h6.92v3.46h-6.92zM472.65,207.51h51.90v3.46h-51.90zM579.91,207.51h41.52v3.46h-41.52zM624.89,207.51h3.46v3.46h-3.46zM631.81,207.51h27.68v3.46h-27.68zM662.95,207.51h13.84v3.46h-13.84zM680.25,207.51h10.38v3.46h-10.38zM701.02,207.51h13.84v3.46h-13.84zM472.65,210.97h51.90v3.46h-51.90zM576.45,210.97h13.84v3.46h-13.84zM593.75,210.97h58.82v3.46h-58.82zM656.03,210.97h31.14v3.46h-31.14zM694.09,210.97h13.84v3.46h-13.84zM476.11,214.43h48.44v3.46h-48.44zM576.45,214.43h10.38v3.46h-10.38zM590.29,214.43h44.98v3.46h-44.98zM638.73,214.43h3.46v3.46h-3.46zM645.65,214.43h3.46v3.46h-3.46zM652.57,214.43h13.84v3.46h-13.84zM669.87,214.43h10.38v3.46h-10.38zM687.17,214.43h13.84v3.46h-13.84zM476.11,217.89h48.44v3.46h-48.44zM572.99,217.89h76.12v3.46h-76.12zM652.57,217.89h24.22v3.46h-24.22zM680.25,217.89h13.84v3.46h-13.84zM479.57,221.35h44.98v3.46h-44.98zM572.99,221.35h48.44v3.46h-48.44zM624.89,221.35h13.84v3.46h-13.84zM645.65,221.35h34.60v3.46h-34.60zM683.71,221.35h3.46v3.46h-3.46zM483.03,224.81h41.52v3.46h-41.52zM569.53,224.81h62.28v3.46h-62.28zM638.73,224.81h6.92v3.46h-6.92zM649.11,224.81h34.60v3.46h-34.60zM483.03,228.27h41.52v3.46h-41.52zM569.53,228.27h44.98v3.46h-44.98zM617.97,228.27h58.82v3.46h-58.82zM483.03,231.73h41.52v3.46h-41.52zM566.07,231.73h41.52v3.46h-41.52zM611.05,231.73h58.82v3.46h-58.82zM486.49,235.19h38.06v3.46h-38.06zM566.07,235.19h20.76v3.46h-20.76zM590.29,235.19h72.66v3.46h-72.66zM486.49,238.65h38.06v3.46h-38.06zM562.61,238.65h93.42v3.46h-93.42zM489.95,242.11h34.60v3.46h-34.60zM562.61,242.11h31.14v3.46h-31.14zM597.21,242.11h38.06v3.46h-38.06zM638.73,242.11h10.38v3.46h-10.38zM652.57,242.11h6.92v3.46h-6.92zM493.41,245.57h34.60v3.46h-34.60zM559.15,245.57h79.58v3.46h-79.58zM642.19,245.57h6.92v3.46h-6.92zM652.57,245.57h6.92v3.46h-6.92zM476.11,249.03h3.46v3.46h-3.46zM493.41,249.03h34.60v3.46h-34.60zM559.15,249.03h65.74v3.46h-65.74zM628.35,249.03h3.46v3.46h-3.46zM635.27,249.03h13.84v3.46h-13.84zM652.57,249.03h10.38v3.46h-10.38zM479.57,252.49h3.46v3.46h-3.46zM496.87,252.49h31.14v3.46h-31.14zM555.69,252.49h62.28v3.46h-62.28zM621.43,252.49h24.22v3.46h-24.22zM649.11,252.49h6.92v3.46h-6.92zM659.49,252.49h3.46v3.46h-3.46zM483.03,255.95h3.46v3.46h-3.46zM496.87,255.95h31.14v3.46h-31.14zM555.69,255.95h83.04v3.46h-83.04zM642.19,255.95h6.92v3.46h-6.92zM652.57,255.95h13.84v3.46h-13.84zM486.49,259.41h3.46v3.46h-3.46zM500.33,259.41h27.68v3.46h-27.68zM552.23,259.41h114.18v3.46h-114.18zM489.95,262.87h3.46v3.46h-3.46zM503.79,262.87h24.22v3.46h-24.22zM552.23,262.87h117.64v3.46h-117.64zM493.41,266.33h3.46v3.46h-3.46zM507.25,266.33h20.76v3.46h-20.76zM548.77,266.33h121.10v3.46h-121.10zM496.87,269.79h3.46v3.46h-3.46zM507.25,269.79h24.22v3.46h-24.22zM534.93,269.79h10.38v3.46h-10.38zM548.77,269.79h121.10v3.46h-121.10zM500.33,273.25h3.46v3.46h-3.46zM510.71,273.25h152.24v3.46h-152.24zM500.33,276.71h3.46v3.46h-3.46zM510.71,276.71h138.40v3.46h-138.40zM503.79,280.17h3.46v3.46h-3.46zM514.17,280.17h124.56v3.46h-124.56zM507.25,283.63h3.46v3.46h-3.46zM517.63,283.63h117.64v3.46h-117.64zM510.71,287.09h3.46v3.46h-3.46zM517.63,287.09h117.64v3.46h-117.64zM514.17,290.55h3.46v3.46h-3.46zM521.09,290.55h103.80v3.46h-103.80zM635.27,290.55h3.46v3.46h-3.46zM517.63,294.01h3.46v3.46h-3.46zM524.55,294.01h79.58v3.46h-79.58zM617.97,294.01h20.76v3.46h-20.76zM521.09,297.47h114.18v3.46h-114.18zM524.55,300.93h86.50v3.46h-86.50zM496.87,304.39h96.88v3.46h-96.88zM486.49,307.85h148.78v3.46h-148.78zM642.19,307.85h3.46v3.46h-3.46zM489.95,311.31h155.70v3.46h-155.70zM489.95,314.77h79.58v3.46h-79.58zM572.99,314.77h13.84v3.46h-13.84zM590.29,314.77h10.38v3.46h-10.38zM607.59,314.77h13.84v3.46h-13.84zM624.89,314.77h3.46v3.46h-3.46zM489.95,318.23h76.12v3.46h-76.12zM569.53,318.23h3.46v3.46h-3.46zM593.75,318.23h6.92v3.46h-6.92zM493.41,321.69h79.58v3.46h-79.58zM503.79,325.15h72.66v3.46h-72.66zM493.41,328.61h83.04v3.46h-83.04zM493.41,332.07h51.90v3.46h-51.90zM548.77,332.07h13.84v3.46h-13.84zM566.07,332.07h3.46v3.46h-3.46zM496.87,335.53h24.22v3.46h-24.22zM528.01,335.53h31.14v3.46h-31.14zM496.87,338.99h51.90v3.46h-51.90zM500.33,342.45h41.52v3.46h-41.52zM500.33,345.91h3.46v3.46h-3.46zM507.25,345.91h10.38v3.46h-10.38zM521.09,345.91h17.30v3.46h-17.30zM521.09,349.37h3.46v3.46h-3.46z" fill="#c3c3c3"/><path d="M718.32,86.40h3.46v3.46h-3.46zM721.78,93.32h6.92v3.46h-6.92zM728.70,100.24h6.92v3.46h-6.92zM676.79,107.16h3.46v3.46h-3.46zM683.71,107.16h3.46v3.46h-3.46zM728.70,110.62h3.46v3.46h-3.46zM683.71,114.08h3.46v3.46h-3.46zM687.17,117.54h3.46v3.46h-3.46zM728.70,117.54h3.46v3.46h-3.46zM732.16,121.00h3.46v3.46h-3.46zM645.65,124.46h6.92v3.46h-6.92zM659.49,124.46h3.46v3.46h-3.46zM735.62,124.46h3.46v3.46h-3.46zM638.73,127.92h3.46v3.46h-3.46zM652.57,127.92h3.46v3.46h-3.46zM496.87,131.38h3.46v3.46h-3.46zM617.97,131.38h6.92v3.46h-6.92zM631.81,131.38h3.46v3.46h-3.46zM732.16,131.38h3.46v3.46h-3.46zM483.03,134.85h3.46v3.46h-3.46zM493.41,134.85h3.46v3.46h-3.46zM624.89,134.85h6.92v3.46h-6.92zM476.11,138.31h6.92v3.46h-6.92zM489.95,138.31h3.46v3.46h-3.46zM500.33,138.31h3.46v3.46h-3.46zM510.71,138.31h6.92v3.46h-6.92zM742.54,138.31h3.46v3.46h-3.46zM462.27,141.77h13.84v3.46h-13.84zM503.79,141.77h6.92v3.46h-6.92zM451.89,145.23h13.84v3.46h-13.84zM746.00,145.23h3.46v3.46h-3.46zM444.97,148.69h6.92v3.46h-6.92zM752.92,148.69h3.46v3.46h-3.46zM752.92,152.15h3.46v3.46h-3.46zM752.92,159.07h3.46v3.46h-3.46zM752.92,162.53h3.46v3.46h-3.46zM752.92,169.45h3.46v3.46h-3.46zM759.84,176.37h3.46v3.46h-3.46zM469.19,197.13h3.46v3.46h-3.46zM469.19,204.05h3.46v3.46h-3.46zM479.57,224.81h3.46v3.46h-3.46zM649.11,242.11h3.46v3.46h-3.46zM472.65,245.57h3.46v3.46h-3.46zM649.11,245.57h3.46v3.46h-3.46zM649.11,249.03h3.46v3.46h-3.46zM662.95,252.49h3.46v3.46h-3.46zM666.41,255.95h3.46v3.46h-3.46zM666.41,259.41h3.46v3.46h-3.46zM541.85,262.87h3.46v3.46h-3.46zM528.01,266.33h3.46v3.46h-3.46zM538.39,266.33h6.92v3.46h-6.92zM669.87,266.33h3.46v3.46h-3.46zM531.47,269.79h3.46v3.46h-3.46zM545.31,269.79h3.46v3.46h-3.46zM669.87,269.79h3.46v3.46h-3.46zM635.27,283.63h3.46v3.46h-3.46zM635.27,287.09h3.46v3.46h-3.46zM638.73,294.01h3.46v3.46h-3.46zM635.27,297.47h3.46v3.46h-3.46zM493.41,304.39h3.46v3.46h-3.46zM593.75,304.39h3.46v3.46h-3.46zM638.73,304.39h3.46v3.46h-3.46zM483.03,307.85h3.46v3.46h-3.46zM635.27,307.85h6.92v3.46h-6.92zM645.65,307.85h3.46v3.46h-3.46zM486.49,311.31h3.46v3.46h-3.46zM486.49,314.77h3.46v3.46h-3.46zM569.53,314.77h3.46v3.46h-3.46zM586.83,314.77h3.46v3.46h-3.46zM621.43,314.77h3.46v3.46h-3.46zM628.35,314.77h6.92v3.46h-6.92zM566.07,318.23h3.46v3.46h-3.46zM572.99,318.23h3.46v3.46h-3.46zM600.67,318.23h3.46v3.46h-3.46zM489.95,321.69h3.46v3.46h-3.46zM572.99,321.69h3.46v3.46h-3.46zM493.41,325.15h10.38v3.46h-10.38zM562.61,332.07h3.46v3.46h-3.46zM521.09,335.53h6.92v3.46h-6.92zM559.15,335.53h3.46v3.46h-3.46zM569.53,335.53h3.46v3.46h-3.46zM548.77,338.99h10.38v3.46h-10.38zM541.85,342.45h6.92v3.46h-6.92zM496.87,345.91h3.46v3.46h-3.46zM503.79,345.91h3.46v3.46h-3.46zM517.63,345.91h3.46v3.46h-3.46zM524.55,349.37h3.46v3.46h-3.46zM514.17,352.83h6.92v3.46h-6.92z" fill="#0f0f0f"/><path d="M178.25,47.9V567.5M247.45,47.9V567.5M316.65,47.9V567.5M180.9,100.15H868.0M385.85,47.9V567.5M180.9,169.35H868.0M455.05,47.9V567.5M180.9,238.55H868.0M524.25,47.9V567.5M180.9,307.75H868.0M593.45,47.9V567.5M180.9,376.95H868.0M662.65,47.9V567.5M180.9,446.15H868.0M731.85,47.9V567.5M180.9,515.35H868.0M801.05,47.9V567.5M870.25,47.9V567.5" stroke="rgba(165,172,172,0.34)" stroke-width="1" fill="none"/><circle cx="434.9" cy="158.2" r="1.7" fill="#f21a0a"/><circle cx="437.5" cy="157.2" r="1.7" fill="#f21a0a"/><circle cx="440.0" cy="156.2" r="1.7" fill="#f21a0a"/><circle cx="442.6" cy="155.2" r="1.7" fill="#f21a0a"/><circle cx="445.2" cy="154.2" r="1.7" fill="#f21a0a"/><circle cx="447.8" cy="153.2" r="1.7" fill="#f21a0a"/><circle cx="450.3" cy="152.2" r="1.7" fill="#f21a0a"/><circle cx="452.9" cy="151.2" r="1.7" fill="#f21a0a"/><circle cx="494.5" cy="146.7" r="1.7" fill="#f21a0a"/><circle cx="497.0" cy="145.4" r="1.7" fill="#f21a0a"/><circle cx="499.5" cy="144.0" r="1.7" fill="#f21a0a"/><circle cx="502.0" cy="142.7" r="1.7" fill="#f21a0a"/><circle cx="504.5" cy="141.3" r="1.7" fill="#f21a0a"/><circle cx="506.9" cy="140.0" r="1.7" fill="#f21a0a"/><circle cx="509.4" cy="138.6" r="1.7" fill="#f21a0a"/><circle cx="511.9" cy="137.3" r="1.7" fill="#f21a0a"/><circle cx="514.4" cy="135.9" r="1.7" fill="#f21a0a"/><circle cx="516.9" cy="134.6" r="1.7" fill="#f21a0a"/><circle cx="482.2" cy="145.0" r="1.7" fill="#f21a0a"/><circle cx="484.5" cy="141.8" r="1.7" fill="#f21a0a"/><circle cx="486.6" cy="137.7" r="1.7" fill="#f21a0a"/><circle cx="491.3" cy="143.8" r="1.7" fill="#f21a0a"/><circle cx="476.0" cy="231.8" r="1.7" fill="#f21a0a"/><circle cx="471.1" cy="251.2" r="1.7" fill="#f2640c"/><circle cx="471.1" cy="253.8" r="1.7" fill="#f03a0a"/><circle cx="462.4" cy="204.7" r="1.7" fill="#f2640c"/><circle cx="462.6" cy="208.8" r="1.7" fill="#f21a0a"/><circle cx="517.3" cy="274.2" r="1.5" fill="#f2640c"/><circle cx="516.5" cy="275.8" r="1.5" fill="#e8d010"/><circle cx="515.4" cy="277.4" r="1.5" fill="#e8d010"/><circle cx="527.5" cy="270.5" r="1.7" fill="#f2640c"/><circle cx="530.0" cy="272.5" r="1.7" fill="#e8d010"/><circle cx="532.5" cy="273.8" r="1.7" fill="#30e010"/><circle cx="535.0" cy="274.0" r="1.7" fill="#30e010"/><circle cx="537.5" cy="273.0" r="1.7" fill="#e8d010"/><circle cx="540.0" cy="271.0" r="1.7" fill="#f2640c"/><circle cx="542.0" cy="272.5" r="1.7" fill="#f21a0a"/><circle cx="543.5" cy="273.5" r="1.7" fill="#30e010"/><circle cx="539.0" cy="269.0" r="1.7" fill="#f21a0a"/><circle cx="616.0" cy="136.1" r="1.5" fill="#f5120a"/><circle cx="623.0" cy="130.5" r="1.5" fill="#f5120a"/><circle cx="629.5" cy="125.6" r="1.5" fill="#f5120a"/><circle cx="636.3" cy="121.3" r="1.5" fill="#f5120a"/><circle cx="640.3" cy="121.9" r="1.5" fill="#f5120a"/><circle cx="644.4" cy="122.4" r="1.5" fill="#f5120a"/><circle cx="650.0" cy="121.1" r="1.5" fill="#f5120a"/><circle cx="665.6" cy="104.2" r="1.5" fill="#f5120a"/><circle cx="671.8" cy="103.1" r="1.5" fill="#f5120a"/><circle cx="672.4" cy="109.5" r="1.5" fill="#f5120a"/><circle cx="707.1" cy="78.5" r="1.5" fill="#f5120a"/><circle cx="710.2" cy="83.4" r="1.5" fill="#f5120a"/><circle cx="715.5" cy="84.8" r="1.5" fill="#f5120a"/><circle cx="714.7" cy="93.4" r="1.5" fill="#f5120a"/><circle cx="721.6" cy="93.4" r="1.5" fill="#f5120a"/><circle cx="717.4" cy="104.7" r="1.5" fill="#f5120a"/><circle cx="717.9" cy="111.5" r="1.5" fill="#f5120a"/><circle cx="720.6" cy="115.5" r="1.5" fill="#f5120a"/><circle cx="726.0" cy="117.3" r="1.5" fill="#f5120a"/><circle cx="722.3" cy="126.8" r="1.5" fill="#f5120a"/><circle cx="729.7" cy="126.5" r="1.5" fill="#f5120a"/><circle cx="734.8" cy="127.7" r="1.5" fill="#f5120a"/><circle cx="734.4" cy="134.8" r="1.5" fill="#f5120a"/><circle cx="739.4" cy="136.5" r="1.5" fill="#f5120a"/><circle cx="740.8" cy="141.5" r="1.5" fill="#f5120a"/><circle cx="745.3" cy="144.2" r="1.5" fill="#f5120a"/><circle cx="744.5" cy="150.2" r="1.5" fill="#f5120a"/><circle cx="745.8" cy="155.0" r="1.5" fill="#f5120a"/><circle cx="749.4" cy="158.4" r="1.5" fill="#f5120a"/><circle cx="750.2" cy="168.4" r="1.5" fill="#f5120a"/><circle cx="644.7" cy="240.0" r="1.7" fill="#f2500c"/><circle cx="645.9" cy="241.8" r="1.7" fill="#f2500c"/><circle cx="647.2" cy="243.7" r="1.7" fill="#f2500c"/><circle cx="648.4" cy="245.5" r="1.7" fill="#f2500c"/><circle cx="657.5" cy="244.4" r="1.7" fill="#f28a0c"/><circle cx="658.6" cy="246.3" r="1.7" fill="#f28a0c"/><circle cx="659.8" cy="248.2" r="1.7" fill="#f28a0c"/><circle cx="660.9" cy="250.1" r="1.7" fill="#f28a0c"/><circle cx="662.0" cy="252.0" r="1.7" fill="#f28a0c"/><circle cx="661.8" cy="251.5" r="1.7" fill="#e8d010"/><circle cx="662.5" cy="253.0" r="1.7" fill="#f2400c"/><circle cx="663.3" cy="254.9" r="1.7" fill="#f2400c"/><circle cx="664.1" cy="256.9" r="1.7" fill="#f2400c"/><circle cx="664.9" cy="258.8" r="1.7" fill="#f2400c"/><circle cx="665.6" cy="260.7" r="1.7" fill="#f2400c"/><circle cx="666.4" cy="262.6" r="1.7" fill="#f2400c"/><circle cx="667.2" cy="264.6" r="1.7" fill="#f2400c"/><circle cx="668.0" cy="266.5" r="1.7" fill="#f2400c"/><circle cx="633.9" cy="278.9" r="1.7" fill="#f2640c"/><circle cx="634.6" cy="280.9" r="1.7" fill="#f2640c"/><circle cx="635.3" cy="283.0" r="1.7" fill="#f2640c"/><circle cx="636.0" cy="285.0" r="1.7" fill="#f2640c"/><circle cx="640.1" cy="289.8" r="1.7" fill="#f21a0a"/><circle cx="635.6" cy="292.0" r="1.7" fill="#f2640c"/><circle cx="634.5" cy="294.3" r="1.7" fill="#f2640c"/><circle cx="633.4" cy="296.6" r="1.7" fill="#f2640c"/><circle cx="634.8" cy="293.8" r="1.7" fill="#f21a0a"/><circle cx="637.2" cy="303.4" r="1.7" fill="#f21a0a"/><circle cx="645.2" cy="305.3" r="1.7" fill="#f21a0a"/><circle cx="623.3" cy="313.7" r="1.7" fill="#f2300a"/><circle cx="627.6" cy="312.0" r="1.7" fill="#f2300a"/><circle cx="631.8" cy="310.4" r="1.7" fill="#f2300a"/><circle cx="636.1" cy="308.7" r="1.7" fill="#f2300a"/><circle cx="640.4" cy="307.0" r="1.7" fill="#f2300a"/><circle cx="594.0" cy="302.7" r="1.7" fill="#f2640c"/><circle cx="587.4" cy="311.8" r="1.7" fill="#f2a00c"/><circle cx="587.6" cy="313.6" r="1.7" fill="#f2640c"/><circle cx="601.2" cy="318.0" r="1.7" fill="#f21a0a"/><circle cx="576.5" cy="317.6" r="1.7" fill="#f21a0a"/><circle cx="579.4" cy="315.8" r="1.7" fill="#f21a0a"/><circle cx="577.5" cy="319.0" r="1.7" fill="#f21a0a"/><linearGradient id="l1" gradientUnits="userSpaceOnUse" x1="483.3" y1="315" x2="490.4" y2="331.8"><stop offset="0" stop-color="#10e040"/><stop offset="1" stop-color="#28e018"/></linearGradient><path d="M483.3,315L490.4,331.8" stroke="url(#l1)" stroke-width="3.5" stroke-linecap="round" fill="none"/><circle cx="482.3" cy="313.6" r="1.7" fill="#50e010"/><circle cx="484.5" cy="312.0" r="1.3" fill="#f21a0a"/><linearGradient id="l2" gradientUnits="userSpaceOnUse" x1="492.6" y1="338" x2="497.5" y2="350"><stop offset="0" stop-color="#20e018"/><stop offset="1" stop-color="#90e010"/></linearGradient><path d="M492.6,338L497.5,350" stroke="url(#l2)" stroke-width="3.5" stroke-linecap="round" fill="none"/><linearGradient id="l2b" gradientUnits="userSpaceOnUse" x1="497.5" y1="350" x2="500.6" y2="357"><stop offset="0" stop-color="#c0d810"/><stop offset="1" stop-color="#f29010"/></linearGradient><path d="M497.5,350L500.6,357" stroke="url(#l2b)" stroke-width="3.5" stroke-linecap="round" fill="none"/><circle cx="492.6" cy="331.9" r="1.7" fill="#f2640c"/><circle cx="494.7" cy="331.3" r="1.7" fill="#f2640c"/><circle cx="496.8" cy="330.8" r="1.7" fill="#f2640c"/><circle cx="498.9" cy="330.2" r="1.7" fill="#f2640c"/><circle cx="501.0" cy="329.7" r="1.7" fill="#f2640c"/><circle cx="493.0" cy="331.5" r="1.7" fill="#f21a0a"/><circle cx="492.0" cy="309.5" r="1.7" fill="#f2640c"/><circle cx="493.5" cy="307.5" r="1.7" fill="#f2640c"/><linearGradient id="l3" gradientUnits="userSpaceOnUse" x1="507" y1="351" x2="511.5" y2="356.5"><stop offset="0" stop-color="#20e018"/><stop offset="1" stop-color="#70e010"/></linearGradient><path d="M507,351L511.5,356.5" stroke="url(#l3)" stroke-width="3.5" stroke-linecap="round" fill="none"/><circle cx="504.2" cy="352.6" r="1.7" fill="#f2640c"/><circle cx="505.5" cy="351.5" r="1.7" fill="#e8d010"/><circle cx="512.6" cy="359.0" r="1.7" fill="#e8d010"/><circle cx="515.5" cy="358.0" r="1.7" fill="#e8d010"/><circle cx="519.0" cy="357.1" r="1.7" fill="#f2400c"/><circle cx="512.0" cy="357.5" r="1.7" fill="#a0e010"/><circle cx="519.4" cy="350.4" r="1.4" fill="#1a78f0"/><circle cx="523.5" cy="338.0" r="1.2" fill="#f21a0a"/><circle cx="525.5" cy="339.0" r="1.2" fill="#f21a0a"/><circle cx="526.0" cy="342.3" r="1.7" fill="#f2640c"/><circle cx="533.9" cy="343.3" r="1.5" fill="#f010f0"/><circle cx="535.0" cy="345.0" r="1.3" fill="#d010f0"/><circle cx="532.6" cy="345.5" r="1.2" fill="#2060f0"/><linearGradient id="l4" gradientUnits="userSpaceOnUse" x1="527.5" y1="353" x2="575" y2="333.4"><stop offset="0" stop-color="#38e010"/><stop offset="1" stop-color="#60e010"/></linearGradient><path d="M527.5,353L575,333.4" stroke="url(#l4)" stroke-width="3.5" stroke-linecap="round" fill="none"/><linearGradient id="l5" gradientUnits="userSpaceOnUse" x1="568" y1="328.7" x2="574.5" y2="326.5"><stop offset="0" stop-color="#a0e010"/><stop offset="1" stop-color="#f2b010"/></linearGradient><path d="M568,328.7L574.5,326.5" stroke="url(#l5)" stroke-width="2.6" stroke-linecap="round" fill="none"/><circle cx="568.5" cy="330.2" r="1.1" fill="#f21a0a"/><linearGradient id="l6" gradientUnits="userSpaceOnUse" x1="570.5" y1="320.5" x2="574" y2="319"><stop offset="0" stop-color="#50e010"/><stop offset="1" stop-color="#70e010"/></linearGradient><path d="M570.5,320.5L574,319" stroke="url(#l6)" stroke-width="2.6" stroke-linecap="round" fill="none"/><circle cx="569.0" cy="321.5" r="1.2" fill="#f2400c"/><circle cx="576.5" cy="317.6" r="1.7" fill="#f21a0a"/><circle cx="579.4" cy="315.8" r="1.7" fill="#f21a0a"/><path d="M523.6,294V307" stroke="#f01010" stroke-width="1"/><path d="M524.9,294V307M529.1,294V307" stroke="#10e010" stroke-width="1.1"/><path d="M511.1,309L524,307.7" stroke="#10e010" stroke-width="1.1"/><path d="M529.9,307.7L543,306.8" stroke="#f01010" stroke-width="1.1"/><rect x="524.4" y="306.9" width="1.4" height="1.6" fill="#1010e0"/><rect x="528.6" y="306.9" width="1.4" height="1.6" fill="#1010e0"/><rect x="526" y="306.7" width="2.2" height="1.8" fill="#f040e0"/><text x="513" y="312.3" font-family="Liberation Sans" font-size="3.6" font-weight="bold" fill="#fff" stroke="#fff" stroke-width="0.35" textLength="24" lengthAdjust="spacingAndGlyphs">base_footprint</text></g></svg>
</body></html>
